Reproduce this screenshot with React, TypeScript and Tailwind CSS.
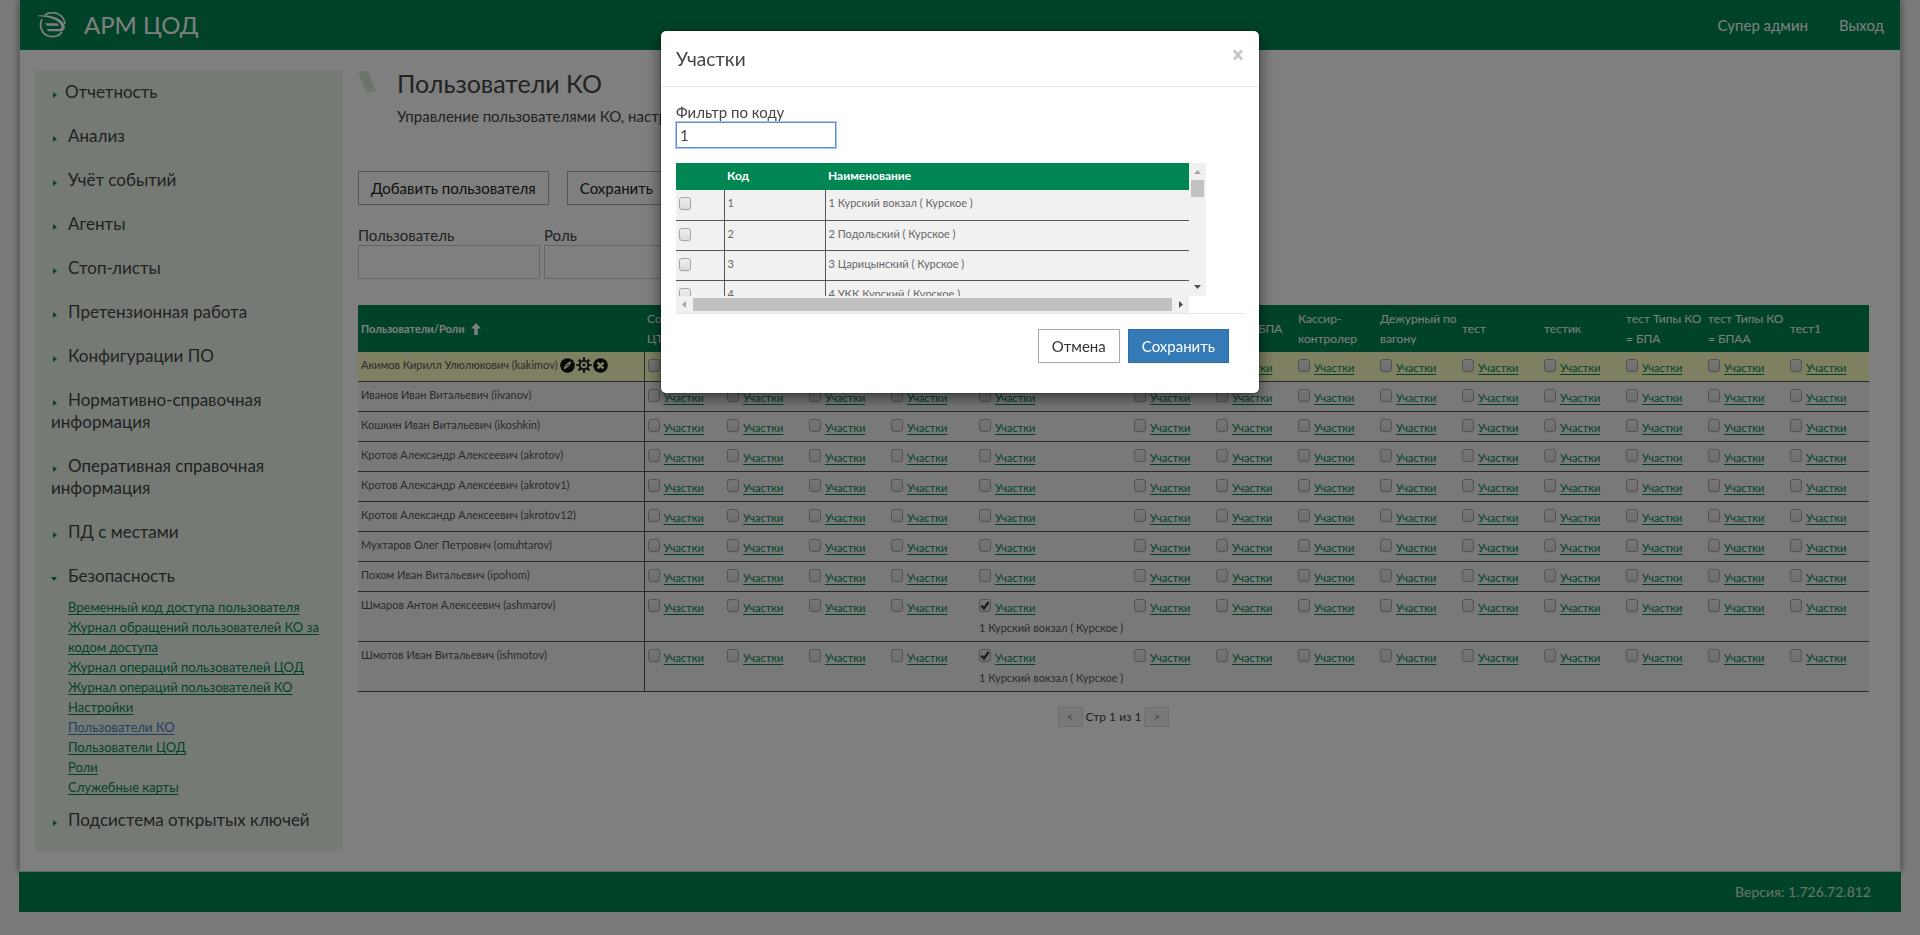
import React, { useState } from "react";

type User = { name: string; login: string; assigned?: boolean; active?: boolean };

const menuTop = [
  "Отчетность",
  "Анализ",
  "Учёт событий",
  "Агенты",
  "Стоп-листы",
  "Претензионная работа",
  "Конфигурации ПО",
  "Нормативно-справочная информация",
  "Оперативная справочная информация",
  "ПД с местами",
];

const securityLinks = [
  "Временный код доступа пользователя",
  "Журнал обращений пользователей КО за кодом доступа",
  "Журнал операций пользователей ЦОД",
  "Журнал операций пользователей КО",
  "Настройки",
  "Пользователи КО",
  "Пользователи ЦОД",
  "Роли",
  "Служебные карты",
];

const roles: { title: string; width: string }[] = [
  { title: "Сотрудник ЦТО", width: "w-20" },
  { title: "", width: "w-[82px]" },
  { title: "", width: "w-[82px]" },
  { title: "", width: "w-[88px]" },
  { title: "", width: "w-[155px]" },
  { title: "", width: "w-[82px]" },
  { title: "Кассир БПА", width: "w-[82px]" },
  { title: "Кассир-контролер", width: "w-[82px]" },
  { title: "Дежурный по вагону", width: "w-[82px]" },
  { title: "тест", width: "w-[82px]" },
  { title: "тестик", width: "w-[82px]" },
  { title: "тест Типы КО = БПА", width: "w-[82px]" },
  { title: "тест Типы КО = БПАА", width: "w-[82px]" },
  { title: "тест1", width: "w-[82px]" },
];

const users: User[] = [
  { name: "Акимов Кирилл Улюлюкович", login: "kakimov", active: true },
  { name: "Иванов Иван Витальевич", login: "iivanov" },
  { name: "Кошкин Иван Витальевич", login: "ikoshkin" },
  { name: "Кротов Александр Алексеевич", login: "akrotov" },
  { name: "Кротов Александр Алексеевич", login: "akrotov1" },
  { name: "Кротов Александр Алексеевич", login: "akrotov12" },
  { name: "Мухтаров Олег Петрович", login: "omuhtarov" },
  { name: "Похом Иван Витальевич", login: "ipohom" },
  { name: "Шмаров Антон Алексеевич", login: "ashmarov", assigned: true },
  { name: "Шмотов Иван Витальевич", login: "ishmotov", assigned: true },
];

const sections = [
  { code: "1", name: "1 Курский вокзал ( Курское )" },
  { code: "2", name: "2 Подольский ( Курское )" },
  { code: "3", name: "3 Царицынский ( Курское )" },
  { code: "4", name: "4 УКК Курский ( Курское )" },
];

function Logo() {
  return (
    <svg viewBox="0 0 28 26" className="h-[26px] w-7 shrink-0" aria-hidden="true">
      <g fill="none" stroke="#fff">
        <path d="M7 2.800C14-1.600 25.500.8 27 12" strokeWidth="1.600" />
        <path d="M4 7.200C.2 14.500 4.500 24.600 14.200 24.600c4.200 0 7.600-1.600 9.800-4.600" strokeWidth="1.800" />
      </g>
      <path
        d="M0 3.400C10 2.600 21.500 4.800 25.800 11.600c2.200 3.600.8 7.600-3 7.600H10.200L8.600 16.900H21.500c1.900 0 2.500-1.800 1.400-3.700C19.500 7.200 11 4.900 0 4.300z"
        fill="#fff"
      />
      <path d="M7.200 11.300h12l1.800 2.400H8.600z" fill="#fff" />
    </svg>
  );
}

function Arrow({ open }: { open?: boolean }) {
  return (
    <svg viewBox="0 0 8 6" className="inline-block h-[6px] w-2 align-baseline" fill="#008652" aria-hidden="true">
      {open ? <path d="M0 1h6L3 5z" /> : <path d="M2 0l4 3-4 3z" />}
    </svg>
  );
}

function PenIcon() {
  return (
    <svg viewBox="0 0 15 15" className="size-[15px]" aria-hidden="true">
      <circle cx="7.500" cy="7.500" r="7.300" fill="#111" />
      <path d="M3.800 11.200l.9-3.300 3.600-3.700 2.900-.9-.8 3-3.500 3.700z" fill="#ffffc4" />
      <path d="M6.200 8.800l2.800-2.800" stroke="#111" strokeWidth=".8" />
    </svg>
  );
}

function GearIcon() {
  return (
    <svg viewBox="0 0 16 16" className="size-4" fill="none" stroke="#222" aria-hidden="true">
      <circle cx="8" cy="8" r="4.300" strokeWidth="2" />
      <circle cx="8" cy="8" r="1.400" fill="#222" stroke="none" />
      <path
        d="M8 .3v3M8 12.700v3M.3 8h3M12.700 8h3M2.600 2.600l2.100 2.100M11.300 11.300l2.100 2.100M13.400 2.600l-2.100 2.100M4.700 11.300l-2.100 2.100"
        strokeWidth="2.200"
      />
    </svg>
  );
}

function RemoveIcon() {
  return (
    <svg viewBox="0 0 15 15" className="size-[15px]" aria-hidden="true">
      <circle cx="7.500" cy="7.500" r="7.300" fill="#111" />
      <path d="M4.600 4.600l5.800 5.800M10.400 4.600l-5.800 5.800" stroke="#ffffc4" strokeWidth="2.600" />
    </svg>
  );
}

function Checkbox({ label, defaultChecked }: { label: string; defaultChecked?: boolean }) {
  return (
    <span className="relative inline-flex h-[13px] w-3 shrink-0">
      <input
        type="checkbox"
        aria-label={label}
        defaultChecked={defaultChecked}
        className="peer h-[13px] w-3 appearance-none rounded-[3px] border border-[#a6a6a6] bg-linear-to-b from-[#eeeeee] to-[#dcdcdc] shadow-xs"
      />
      <svg
        viewBox="0 0 12 13"
        className="pointer-events-none absolute inset-0 hidden h-[13px] w-3 peer-checked:block"
        fill="none"
        stroke="#3a3a3a"
        strokeWidth="2.400"
        aria-hidden="true"
      >
        <path d="M2.400 6.600l2.600 2.800 4.600-6.400" />
      </svg>
    </span>
  );
}

function Sidebar() {
  return (
    <nav className="w-[308px] shrink-0 bg-[#ebf5ea] pt-[11px] pl-4">
      <ul>
        {menuTop.map((title, i) => (
          <li key={title} className="mb-[22px] text-[17px] leading-[22px] text-[#444]">
            <Arrow />
            <a href="#" className={i === 0 ? "ml-1.5" : "ml-[9px]"}>
              {title}
            </a>
          </li>
        ))}
        <li className="mb-3 text-[17px] leading-[22px] text-[#444]">
          <Arrow open />
          <a href="#" className="ml-[9px]">
            Безопасность
          </a>
          <ul className="mt-2.5 pl-[17px] text-[13px] leading-5">
            {securityLinks.map((title) => (
              <li key={title}>
                <a
                  href="#"
                  className={
                    title === "Пользователи КО"
                      ? "text-[#4a7cc0] underline underline-offset-2"
                      : "text-[#008652] underline underline-offset-2"
                  }
                >
                  {title}
                </a>
              </li>
            ))}
          </ul>
        </li>
        <li className="mb-5 text-[17px] leading-[22px] text-[#444]">
          <Arrow />
          <a href="#" className="ml-[9px]">
            Подсистема открытых ключей
          </a>
        </li>
      </ul>
    </nav>
  );
}

function UsersTable() {
  return (
    <table className="mt-[26px] w-full table-fixed border-collapse bg-[#f3f3f3] text-[11px] leading-5 text-[#555]">
      <thead>
        <tr className="h-[47px] bg-[#008652] text-left text-xs leading-5 text-white">
          <th className="px-[3px] text-[11px] leading-5 font-bold">
            <span className="flex items-center gap-1.5">
              Пользователи/Роли
              <svg viewBox="0 0 10 12" className="h-3 w-2.5" fill="#fff" aria-hidden="true">
                <path d="M5 0l5 5.500H6.700V12H3.300V5.500H0z" />
              </svg>
            </span>
          </th>
          {roles.map((role, i) => (
            <th key={i} className={`${role.width} pl-[3px] font-normal`}>
              {role.title}
            </th>
          ))}
        </tr>
      </thead>
      <tbody>
        {users.map((user) => (
          <tr
            key={user.login}
            className={user.active ? "border-b border-[#555] bg-[#ffffc4]" : "border-b border-[#555]"}
          >
            <td className="border-r border-[#555] px-[3px] pt-[3px] pb-1 align-top">
              <span className="flex items-center gap-0.5 whitespace-nowrap">
                {user.name} ({user.login})
                {user.active && (
                  <span className="flex h-5 items-center gap-px">
                    <button type="button" aria-label="Редактировать">
                      <PenIcon />
                    </button>
                    <button type="button" aria-label="Настроить">
                      <GearIcon />
                    </button>
                    <button type="button" aria-label="Удалить">
                      <RemoveIcon />
                    </button>
                  </span>
                )}
              </span>
            </td>
            {roles.map((role, i) => {
              const on = user.assigned && i === 4;
              return (
                <td key={i} className="px-[3px] pt-1.5 pb-[3px] align-top whitespace-nowrap">
                  <div className="flex h-5 items-start gap-1">
                    <span className="flex pt-px">
                      <Checkbox label={`${role.title} ${user.login}`} defaultChecked={on} />
                    </span>
                    <a href="#" className="text-[#008652] underline underline-offset-2">
                      Участки
                    </a>
                  </div>
                  {on && <div>1 Курский вокзал ( Курское )</div>}
                </td>
              );
            })}
          </tr>
        ))}
      </tbody>
    </table>
  );
}

function SectionsDialog() {
  const [code, setCode] = useState("1");
  return (
    <div className="fixed inset-0 flex items-start justify-center bg-black/50 pt-[30px]">
      <div
        role="dialog"
        aria-labelledby="dialog-title"
        className="w-[600px] rounded-md border border-black/20 bg-white bg-clip-padding shadow-[0_5px_15px_rgba(0,0,0,0.5)]"
      >
        <div className="flex items-start justify-between border-b border-[#e5e5e5] px-[15px] pt-[15px] pb-[14px]">
          <h4 id="dialog-title" className="text-[19px] leading-[26px] text-[#444]">
            Участки
          </h4>
          <button type="button" aria-label="Закрыть" className="flex h-[18px] w-3 items-center text-[#c8c8c8]">
            <svg viewBox="0 0 12 12" className="size-3" stroke="currentColor" strokeWidth="2.800" aria-hidden="true">
              <path d="M2 1.500l8 9M10 1.500l-8 9" />
            </svg>
          </button>
        </div>

        <div className="px-[15px] pt-[15px] pb-[30px]">
          <label htmlFor="code-filter" className="block text-[15px] leading-5 text-[#444]">
            Фильтр по коду
          </label>
          <input
            id="code-filter"
            autoFocus
            value={code}
            onChange={(e) => setCode(e.target.value)}
            className="block h-[26px] w-40 border border-[#5f8fdc] bg-white px-[3px] text-[15px] leading-5 text-[#444] ring-1 ring-[#a9c7f5] outline-none"
          />

          <div className="mt-[15px] grid grid-cols-[513px_17px]">
            <div className="h-[133px] overflow-hidden">
              <table className="w-full table-fixed border-collapse bg-[#f1f1f1] text-[11px] leading-5 text-[#666]">
                <thead>
                  <tr className="h-[27px] bg-[#008652] text-left text-xs text-white">
                    <th className="w-12"></th>
                    <th className="w-[101px] px-[3px] pb-0.5">Код</th>
                    <th className="px-[3px] pb-0.5">Наименование</th>
                  </tr>
                </thead>
                <tbody>
                  {sections.map((s) => (
                    <tr key={s.code} className="h-[30px] border-b border-[#555]">
                      <td className="border-r border-[#555] px-[3px] pt-[7px] align-top">
                        <span className="flex">
                          <Checkbox label={s.name} />
                        </span>
                      </td>
                      <td className="border-r border-[#555] px-[3px] pt-[3px] align-top">{s.code}</td>
                      <td className="px-[3px] pt-[3px] align-top">{s.name}</td>
                    </tr>
                  ))}
                </tbody>
              </table>
            </div>
            <div className="flex flex-col items-center bg-[#f1f1f1]">
              <svg viewBox="0 0 17 17" className="size-[17px]" fill="#a3a3a3" aria-hidden="true">
                <path d="M5 11h7L8.500 7z" />
              </svg>
              <div className="h-[17px] w-[13px] bg-[#c1c1c1]"></div>
              <svg viewBox="0 0 17 17" className="mt-auto size-[17px]" fill="#505050" aria-hidden="true">
                <path d="M5 6h7l-3.500 4z" />
              </svg>
            </div>
            <div className="flex h-[17px] items-center bg-[#f1f1f1]">
              <svg viewBox="0 0 17 17" className="size-[17px]" fill="#a3a3a3" aria-hidden="true">
                <path d="M10 5v7L6 8.500z" />
              </svg>
              <div className="h-[13px] grow bg-[#c1c1c1]"></div>
              <svg viewBox="0 0 17 17" className="size-[17px]" fill="#505050" aria-hidden="true">
                <path d="M7 5v7l4-3.500z" />
              </svg>
            </div>
          </div>

          <div className="flex justify-end gap-2 border-t border-[#e5e5e5] pt-[15px] pr-[15px] text-[15px]">
            <button type="button" className="h-[34px] border border-[#aaa] bg-white px-[13px] text-[#333] shadow-xs">
              Отмена
            </button>
            <button
              type="button"
              className="h-[34px] border border-[#2e6da4] bg-[#337ab7] px-[13px] text-white shadow-xs"
            >
              Сохранить
            </button>
          </div>
        </div>
      </div>
    </div>
  );
}

export default function App() {
  return (
    <div className="min-h-screen bg-[#f5f5f5] px-[19px] pb-6 font-['Lato','Liberation_Sans',sans-serif] text-[#444]">
      <div className="border-x border-b border-[#ccc] bg-white shadow-[0_0_6px_rgba(0,0,0,0.5)]">
        <header className="flex h-[50px] items-center bg-[#008652] pr-4 pl-[18px] text-white">
          <Logo />
          <span className="ml-[18px] text-2xl">АРМ ЦОД</span>
          <div className="ml-auto flex gap-[31px] text-[15px]">
            <a href="#">Супер админ</a>
            <a href="#">Выход</a>
          </div>
        </header>

        <div className="flex gap-[15px] py-5 pr-[31px] pl-[15px]">
          <Sidebar />

          <main className="min-w-0 grow">
            <div className="flex gap-[21px]">
              <svg viewBox="0 0 18 21" className="mt-px h-[21px] w-[18px]" fill="#d7ead4" aria-hidden="true">
                <path d="M0 0h10l8 21H8z" />
              </svg>
              <div>
                <h1 className="text-[25px] leading-[26px]">Пользователи КО</h1>
                <p className="mt-2.5 text-[15px] leading-5">Управление пользователями КО, настройка ролей</p>
              </div>
            </div>

            <div className="mt-[45px] flex gap-[18px] text-[15px] text-[#222]">
              <button type="button" className="h-[34px] border border-[#aaa] bg-white px-3 shadow-xs">
                Добавить пользователя
              </button>
              <button type="button" className="h-[34px] border border-[#aaa] bg-white px-3 shadow-xs">
                Сохранить
              </button>
            </div>

            <div className="mt-5 flex gap-1 text-[15px] leading-5">
              <label className="w-[182px]">
                Пользователь
                <input type="text" className="block h-[34px] w-full border border-[#ccc] bg-white px-2" />
              </label>
              <label className="w-[182px]">
                Роль
                <input type="text" className="block h-[34px] w-full border border-[#ccc] bg-white px-2" />
              </label>
            </div>

            <UsersTable />

            <div className="mt-[15px] flex items-center justify-center gap-[3px] text-xs leading-5">
              <button
                type="button"
                aria-label="Предыдущая страница"
                className="flex h-5 w-[25px] items-center justify-center border border-[#ddd] bg-[#f1f1f1] text-[11px] text-[#888]"
              >
                &lt;
              </button>
              <span>Стр 1 из 1</span>
              <button
                type="button"
                aria-label="Следующая страница"
                className="flex h-5 w-[25px] items-center justify-center border border-[#ddd] bg-[#f1f1f1] text-[11px] text-[#888]"
              >
                &gt;
              </button>
            </div>
          </main>
        </div>
      </div>

      <footer className="relative flex h-10 items-center justify-end bg-[#008652] pr-[30px] text-sm text-white/80">
        Версия: 1.726.72.812
      </footer>

      <SectionsDialog />
    </div>
  );
}
